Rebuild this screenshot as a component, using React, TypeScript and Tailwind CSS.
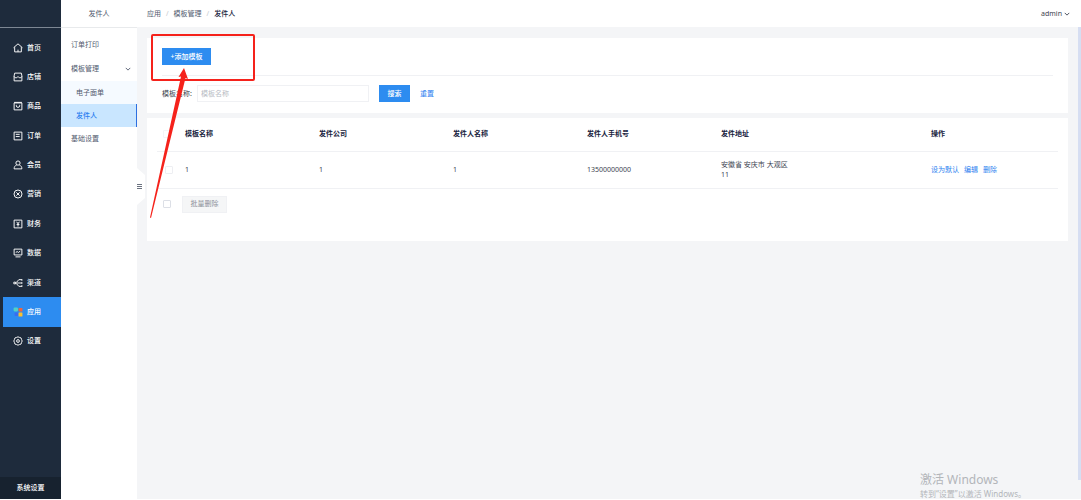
import { useState, type ReactNode } from 'react'

const menus: { name: string; icon: ReactNode }[] = [
  { name: '首页', icon: <path d="M1 8.500 9 1.500 17 8.500M3 7.500V16h12V7.500M9 12v4" /> },
  { name: '店铺', icon: <path d="M3 2h12l1 5v9H2V7zM2 8c1 3 5 3 6 1h2c1 2 5 2 6-1" /> },
  { name: '商品', icon: <path d="M2 3.500h14V16H2zM2 2.500h14M6 7v1.500a3 3 0 0 0 6 0V7" /> },
  { name: '订单', icon: <path d="M2 2h14v14H2zM5 6h7M5 10h7" /> },
  {
    name: '会员',
    icon: (
      <>
        <circle cx="9" cy="5.500" r="3.800" />
        <path d="M6.500 9C4 10 2 12 2 16h14c0-4-2-6-4.500-7" />
      </>
    ),
  },
  {
    name: '营销',
    icon: (
      <>
        <circle cx="9" cy="9" r="7.200" />
        <path d="m6 6 6 6M12 6l-6 6" />
      </>
    ),
  },
  { name: '财务', icon: <path d="M2 2h14v14H2zM6.500 5 9 8.500 11.500 5M9 8v5.500M6.500 10h5" /> },
  { name: '数据', icon: <path d="M2 2h14v10.500H2zM5 8l2.500-1.500L10 8l3-2.500M4.500 16h9" /> },
  { name: '渠道', icon: <path d="M1.500 7.500h3v3h-3zM4.500 9H16M6 8l4.500-5H16M6 10l4.500 5H16M16 2v3M16 7.500v3M16 13v3" /> },
  {
    name: '应用',
    icon: (
      <g stroke="none">
        <rect x="1" y="1" width="8" height="7" rx="2" fill="#4fd1c5" />
        <rect x="10" y="2" width="7" height="6" rx="1" fill="#f0643c" />
        <rect x="3" y="10" width="6" height="6" rx="1" fill="#3b6cf0" />
        <rect x="10" y="10" width="7" height="7" rx="1" fill="#fbc02d" />
      </g>
    ),
  },
  {
    name: '设置',
    icon: (
      <>
        <path d="M6.500 2.500 9 1.500l2.500 1 3 1 1 3 1 2.500-1 2.500-1 3-3 1-2.500 1-2.500-1-3-1-1-3-1-2.500 1-2.500 1-3z" />
        <circle cx="9" cy="9" r="2.500" />
      </>
    ),
  },
]

const rows = [
  { id: 1, name: '1', company: '1', sender: '1', phone: '13500000000', area: '安徽省 安庆市 大观区', address: '11' },
]

const checkbox =
  'block size-2 appearance-none rounded-[1px] border border-[#dcdfe6] bg-white checked:bg-[#2d8cf0]'

function Chevron() {
  return (
    <svg viewBox="0 0 8 8" className="size-1.5" fill="none" stroke="currentColor" strokeWidth="1.200">
      <path d="M1 2.500 4 5.500 7 2.500" />
    </svg>
  )
}

function Sidebar() {
  return (
    <aside className="flex w-[61px] shrink-0 flex-col bg-[#1e2b3c] text-white">
      <div className="h-7 border-b border-[#7d8793]" />
      <nav className="mt-[5px] grid h-[323px] auto-rows-fr">
        {menus.map((menu) => (
          <a
            key={menu.name}
            href="#"
            className={`flex items-center gap-1 font-medium ${
              menu.name === '应用' ? 'ml-[3px] bg-[#2d8cf0] pl-2.5' : 'pl-[13px]'
            }`}
          >
            <svg viewBox="0 0 18 18" className="size-2.5" fill="none" stroke="currentColor" strokeWidth="1.700">
              {menu.icon}
            </svg>
            {menu.name}
          </a>
        ))}
      </nav>
      <a href="#" className="mt-auto flex h-[22px] items-center justify-center bg-[#17222f] font-medium">
        系统设置
      </a>
    </aside>
  )
}

function SubMenu() {
  return (
    <aside className="relative flex w-[76px] shrink-0 flex-col bg-white text-[#515a6e]">
      <div className="flex h-7 items-center justify-center border-b border-[#e8eaec]">发件人</div>
      <nav className="mt-[5px] flex flex-col">
        <a href="#" className="flex h-6 items-center pl-2.5">订单打印</a>
        <button type="button" className="flex h-6 items-center justify-between pr-1.5 pl-2.5">
          模板管理
          <Chevron />
        </button>
        <a href="#" className="flex h-[23px] items-center bg-[#f5faff] pl-[15px]">电子面单</a>
        <a
          href="#"
          className="flex h-[23px] items-center border-r border-[#2d6fe0] bg-[#c9e6ff] pl-[15px] font-medium text-[#2d7ff0]"
        >
          发件人
        </a>
        <a href="#" className="flex h-6 items-center pl-2.5">基础设置</a>
      </nav>

      {/* Collapse handle */}
      <button type="button" aria-label="收起菜单" className="absolute top-[168px] left-full h-[37px] w-2">
        <svg viewBox="0 0 8 37" className="h-full w-full">
          <path d="M0 0 8 7V30L0 37z" fill="#fff" />
          <path d="M0 16.500h5M0 18.500h5M0 20.500h5" stroke="#6b7280" strokeWidth="1" />
        </svg>
      </button>
    </aside>
  )
}

function SearchCard() {
  const [keyword, setKeyword] = useState('')

  return (
    <section className="bg-white px-[15px] pt-2.5 pb-[11px]">
      <div className="border-b border-[#f0f1f4] pb-[10px]">
        <button type="button" className="block h-[17px] w-[49px] bg-[#2d8cf0] font-medium text-white">
          +添加模板
        </button>
      </div>
      <form className="mt-[9px] flex h-[17px] items-center" onSubmit={(e) => e.preventDefault()}>
        <label htmlFor="keyword" className="w-[35px]">模板名称:</label>
        <input
          id="keyword"
          value={keyword}
          onChange={(e) => setKeyword(e.target.value)}
          placeholder="模板名称"
          className="h-[17px] w-[172px] border border-[#f0f1f4] px-[3px] outline-none placeholder:text-[#b8bcc4]"
        />
        <button type="submit" className="ml-2.5 h-[17px] w-[31px] bg-[#2d8cf0] font-medium text-white">
          搜索
        </button>
        <button type="button" className="ml-2.5 text-[#2d7ff0]" onClick={() => setKeyword('')}>
          重置
        </button>
      </form>
    </section>
  )
}

function TableCard() {
  return (
    <section className="bg-white px-2.5 pb-7">
      <table className="w-full table-fixed text-left">
        <colgroup>
          <col className="w-7" />
          <col className="w-[134px]" />
          <col className="w-[134px]" />
          <col className="w-[134px]" />
          <col className="w-[134px]" />
          <col className="w-[210px]" />
          <col />
        </colgroup>
        <thead>
          <tr className="h-[33px] border-b border-[#f0f1f4] text-[#17233d]">
            <th className="pl-1.5">
              <input type="checkbox" aria-label="全选" className={`${checkbox} opacity-30`} />
            </th>
            <th>模板名称</th>
            <th>发件公司</th>
            <th>发件人名称</th>
            <th>发件人手机号</th>
            <th>发件地址</th>
            <th>操作</th>
          </tr>
        </thead>
        <tbody>
          {rows.map((row) => (
            <tr key={row.id} className="h-[37px] border-b border-[#f0f1f4]">
              <td className="pl-2">
                <input type="checkbox" aria-label={`选择 ${row.name}`} className={`${checkbox} opacity-50`} />
              </td>
              <td>{row.name}</td>
              <td>{row.company}</td>
              <td>{row.sender}</td>
              <td>{row.phone}</td>
              <td>
                {row.area}
                <br />
                {row.address}
              </td>
              <td>
                <div className="flex gap-[5px] text-[#2d7ff0]">
                  <a href="#">设为默认</a>
                  <a href="#">编辑</a>
                  <a href="#">删除</a>
                </div>
              </td>
            </tr>
          ))}
        </tbody>
      </table>
      <div className="mt-[7px] flex items-center gap-[11px] pl-1.5">
        <input type="checkbox" aria-label="选择全部" className={checkbox} />
        <button type="button" className="h-[17px] w-[45px] border border-[#f0f1f4] bg-[#f5f6f7] text-[#8c9099]">
          批量删除
        </button>
      </div>
    </section>
  )
}

export default function App() {
  return (
    <div className="relative flex h-screen overflow-hidden border-b border-white bg-[#f4f5f7] font-['Noto_Sans','Noto_Sans_CJK_SC',sans-serif] text-[7px] leading-[10px] text-[#3c4350]">
      <Sidebar />
      <SubMenu />
      <div className="flex min-w-0 flex-1 flex-col">
        <header className="flex h-[27px] shrink-0 items-center justify-between bg-white pr-[11px] pl-2.5">
          <nav className="flex gap-[5px] text-[#515a6e]">
            <a href="#">应用</a>
            <span className="text-[#c5c8ce]">/</span>
            <a href="#">模板管理</a>
            <span className="text-[#c5c8ce]">/</span>
            <span className="font-medium text-[#17233d]">发件人</span>
          </nav>
          <button type="button" className="flex items-center gap-0.5">
            admin
            <Chevron />
          </button>
        </header>
        <div className="flex min-h-0 flex-1">
          <main className="flex min-w-0 flex-1 flex-col gap-[5px] pt-[11px] pr-2.5 pl-2.5">
            <SearchCard />
            <TableCard />
          </main>
          <div className="mb-[19px] w-[3px] bg-[#d6def2]" />
        </div>
      </div>

      {/* Callout around the add button */}
      <div className="pointer-events-none absolute top-[34px] left-[151px] h-[47px] w-[104px] rounded-xs border-2 border-[#f5221b]" />
      <svg className="pointer-events-none absolute top-[68px] left-[150px] h-[150px] w-10" viewBox="0 0 40 150">
        <path d="M34 0 28.500 9 31 8.500 0 149.500 1 150 35.500 10 38 11z" fill="#f5221b" />
      </svg>

      {/* Windows activation notice */}
      <div className="pointer-events-none absolute right-[55px] bottom-0 text-[#b3b6ba]">
        <p className="text-[12px] leading-4">激活 Windows</p>
        <p className="text-[8px] leading-[11px]">转到“设置”以激活 Windows。</p>
      </div>
    </div>
  )
}
